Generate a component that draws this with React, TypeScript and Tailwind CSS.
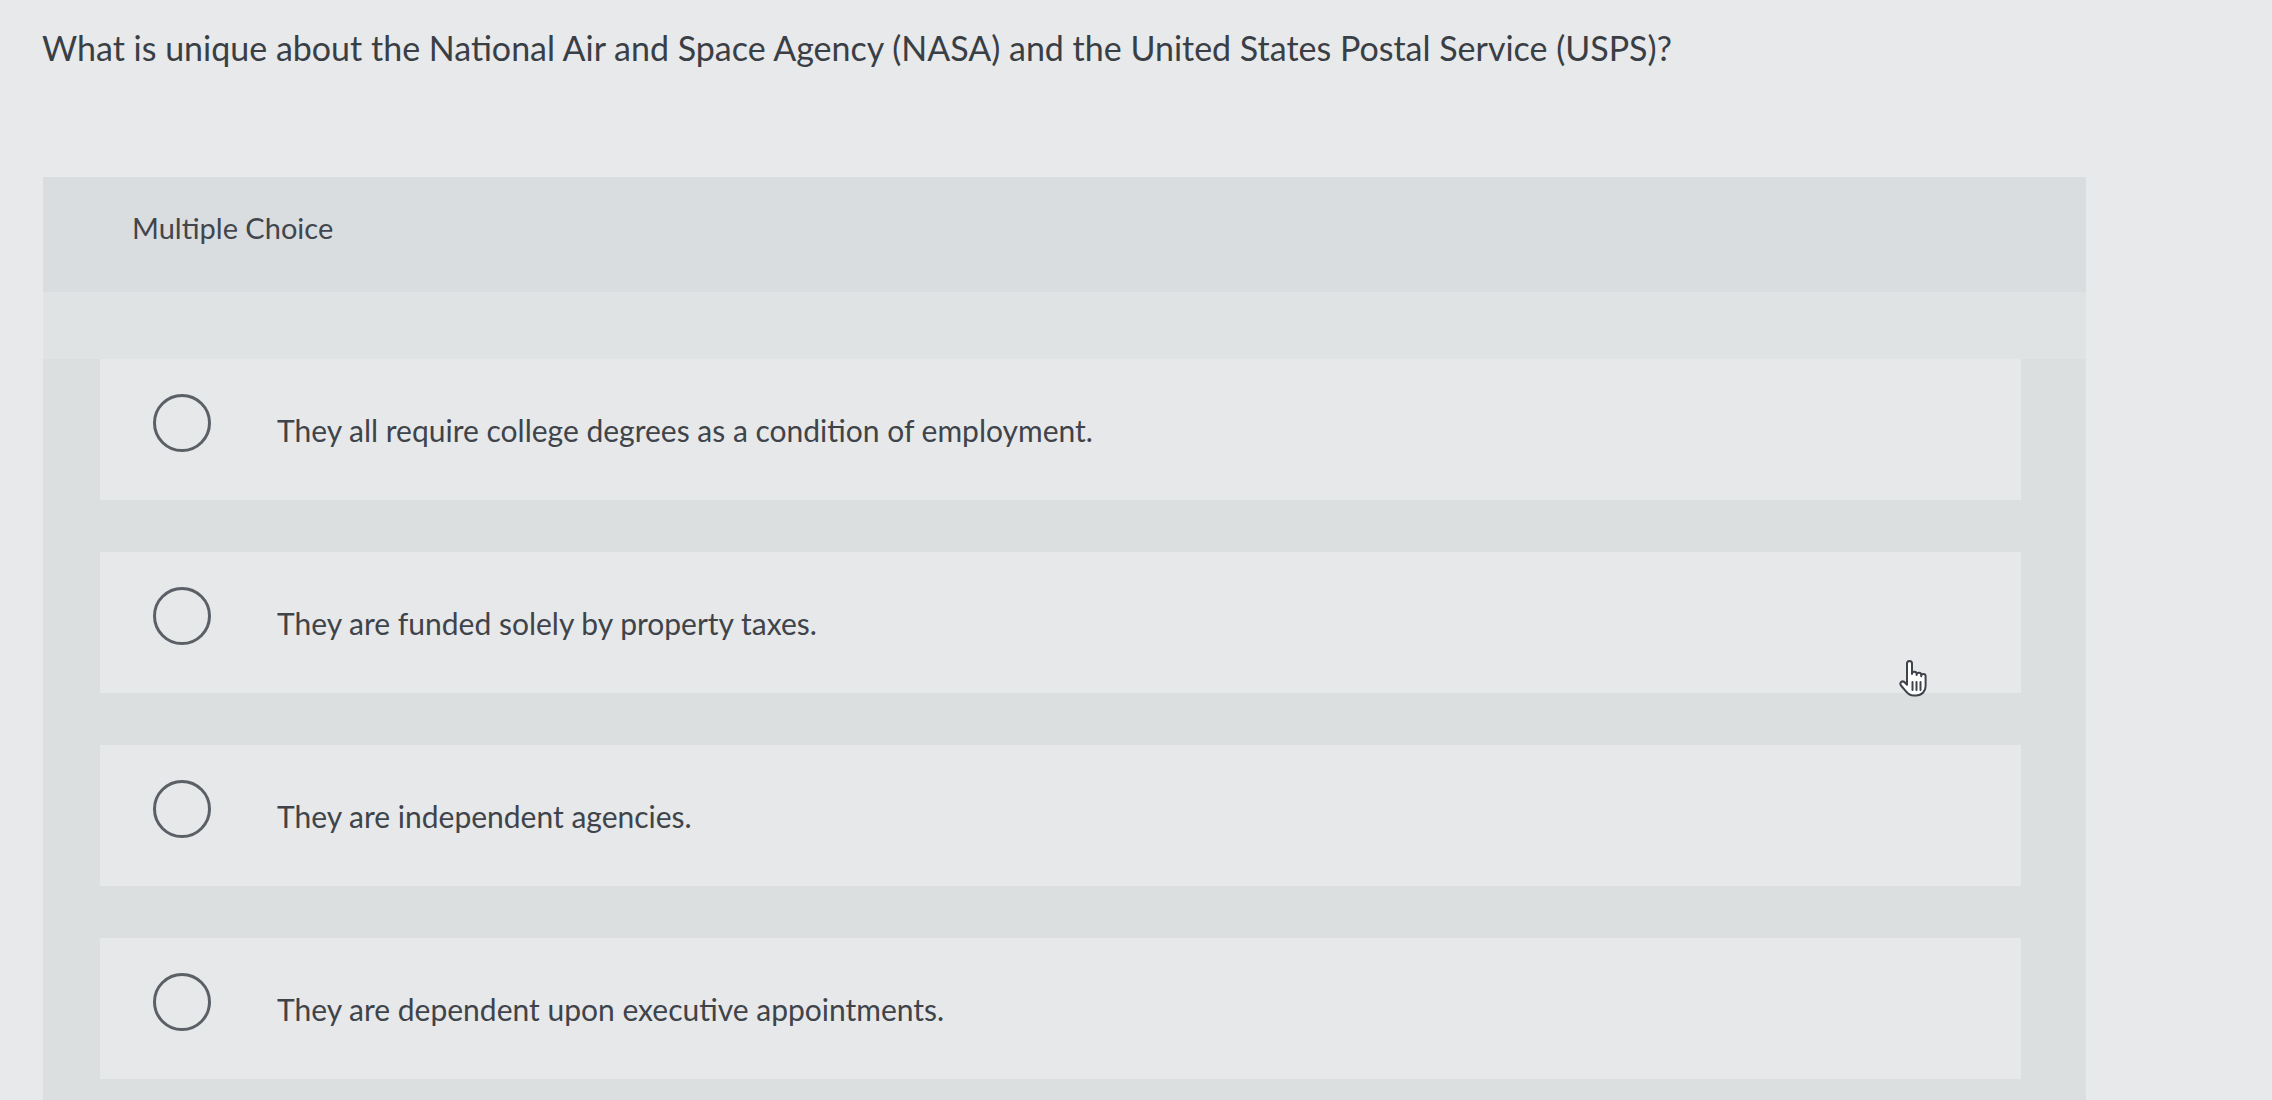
import React from 'react';

const options = [
  'They all require college degrees as a condition of employment.',
  'They are funded solely by property taxes.',
  'They are independent agencies.',
  'They are dependent upon executive appointments.',
];

function HandCursor() {
  return (
    <svg width="34" height="38" viewBox="0 0 34 38" className="absolute left-[1898px] top-[660px]">
      <path
        d="M9 3.5c0-1.6 1.2-2.5 2.5-2.5S14 1.9 14 3.5V14c0-1.4 1.1-2.2 2.3-2.2s2.3.8 2.3 2.2v1c0-1.4 1.1-2.2 2.3-2.2s2.3.8 2.3 2.2v1.2c0-1.3 1-2.1 2.2-2.1s2.2.8 2.2 2.1V26c0 5.5-3.8 9.5-9.5 9.5h-2.5c-3.4 0-5.4-1.3-7.4-3.8L3 25.5c-1-1.3-.8-2.8.3-3.6 1.1-.8 2.6-.5 3.6.6L9 24.8z"
        fill="#ffffff"
        stroke="#3f444b"
        strokeWidth="2"
        strokeLinejoin="round"
      />
      <path d="M14.5 22v8M18.5 22v8M22.5 22v8" stroke="#3f444b" strokeWidth="2" strokeLinecap="round" />
    </svg>
  );
}

export default function App() {
  return (
    <div className="relative w-full h-[1100px] overflow-hidden bg-[#e7e9ea] text-[#3b3f46]" style={{ fontFamily: 'Lato, "Liberation Sans", sans-serif' }}>
      <h1 className="pl-[42px] pt-[25px] text-[34px] leading-[46px] text-[#3a3e45]">
        What is unique about the National Air and Space Agency (NASA) and the United States Postal Service (USPS)?
      </h1>

      <div className="ml-[43px] mt-[106px] w-[2043px] bg-[#dcdfe0]">
        <div className="h-[115px] pl-[89px] pt-[32px] bg-[#dadddf]">
          <p className="text-[29px] leading-[38px] text-[#41454c]">Multiple Choice</p>
        </div>

        <div className="bg-[#e0e3e4] h-[67px]" />

        <div className="flex flex-col gap-[52px] pl-[57px] pr-[65px]">
          {options.map((text) => (
            <div key={text} className="h-[141px] flex items-center bg-[#e6e8e9]">
              <div className="ml-[53px] w-[58px] h-[58px] shrink-0 rounded-full border-[3px] border-[#5b6067] -mt-[14px]" />
              <span className="ml-[66px] text-[30px] leading-[40px] text-[#3f434a]">{text}</span>
            </div>
          ))}
          <div className="h-[60px]" />
        </div>
      </div>

      <HandCursor />
    </div>
  );
}
